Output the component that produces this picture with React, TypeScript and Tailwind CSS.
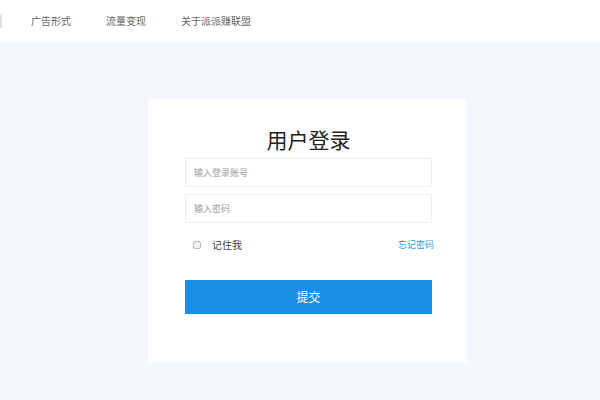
import React from "react";

const font = { fontFamily: '"Noto Sans CJK SC", "Liberation Sans", sans-serif' };

const App = () => {
  return (
    <div className="w-[600px] h-[400px] bg-[#f4f7fb] overflow-hidden" style={font}>
      <div className="h-[43px] bg-white flex items-center text-[10px] text-[#666] relative">
        <div className="absolute left-0 top-[14px] w-[2px] h-[14px] bg-[#e2e2e2]" />
        <div className="flex gap-[35px] pl-[31px] pb-[2px]">
          <span>广告形式</span>
          <span>流量变现</span>
          <span>关于派派赚联盟</span>
        </div>
      </div>
      <div className="pt-[56px] pl-[148px]">
        <div className="w-[319px] h-[264px] bg-white pt-[26px] pl-[37px]">
          <h1 className="w-[247px] text-center text-[21px] leading-[28px] text-[#222]">用户登录</h1>
          <div className="mt-[5px] w-[247px] flex flex-col gap-[7px]">
            <div className="h-[29px] border border-[#efefef] flex items-center px-[8px] text-[9px] text-[#a0a0a0]">
              输入登录账号
            </div>
            <div className="h-[29px] border border-[#efefef] flex items-center px-[8px] text-[9px] text-[#a0a0a0]">
              输入密码
            </div>
          </div>
          <div className="w-[249px] mt-[14px] flex items-center justify-between text-[10px]">
            <div className="flex items-center">
              <span className="ml-[8px] w-[8px] h-[8px] border border-[#bbb] rounded-[2px] bg-[#f3f3f3]" />
              <span className="ml-[11px] text-[#444]">记住我</span>
            </div>
            <span className="text-[#3a9bd6] text-[9px]">忘记密码</span>
          </div>
          <button className="mt-[28px] w-[247px] h-[34px] bg-[#1a8fe3] text-white text-[12px]">提交</button>
        </div>
      </div>
    </div>
  );
};

export default App;
